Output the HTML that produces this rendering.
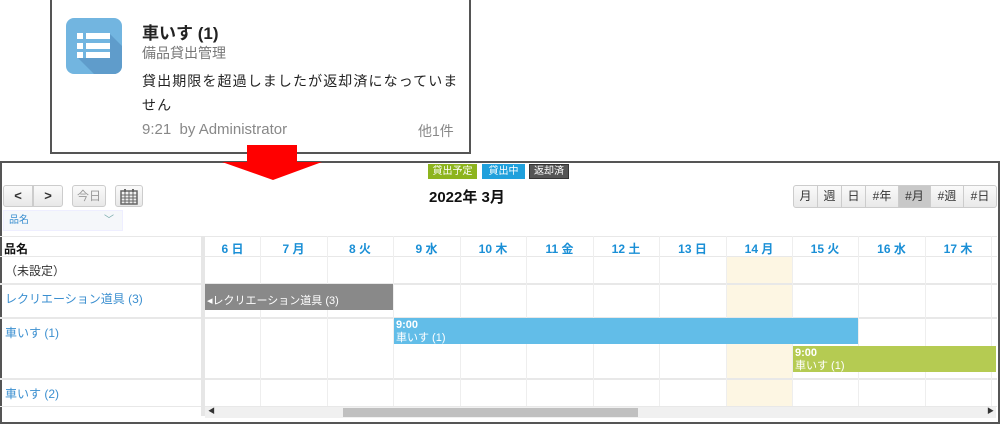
<!DOCTYPE html>
<html><head><meta charset="utf-8"><style>
*{margin:0;padding:0;box-sizing:border-box}
body{width:1000px;height:424px;background:#fff;position:relative;overflow:hidden;font-family:"Liberation Sans","Noto Sans CJK JP",sans-serif}
.a{position:absolute}
.note{left:50px;top:0;width:421px;height:154px;border:2px solid #555;border-top:none;background:#fff}
.frame{left:0;top:161px;width:1000px;height:263px;border:2px solid #555;background:#fff}
.lg{font-size:10px;color:#fff;text-align:center;line-height:15px;height:15px;top:164px}
.btn{border:1px solid #ccc;border-radius:3px;background:linear-gradient(#fafafa,#e8e8e8);text-align:center;font-size:13px;line-height:20px;height:22px;top:185px;color:#333}
.vb{top:185px;height:23px;border:1px solid #ccc;background:linear-gradient(#fafafa,#e9e9e9);font-size:12px;line-height:21px;text-align:center;color:#333}
.hl{background:#e8e8e8;height:1px;left:0;width:997px}
.vl{background:#eee;width:1px;top:236px;height:170px}
.dh{top:240px;font-size:12px;font-weight:bold;color:#1a8fd6;text-align:center}
.rl{left:5px;font-size:12px;color:#3b8fd0}
.ev{color:#fff;font-size:11px;padding-left:2px;line-height:13px}
</style></head><body>
<div class="a note"></div>
<div class="a" style="left:66px;top:18px;width:56px;height:56px;border-radius:8px;background:#72b5e0;overflow:hidden">
<svg class="a" style="left:0;top:0" width="56" height="56"><polygon points="44,16 56,28 56,56 28,56 12,40 44,40" fill="#5f9ccb"/></svg>
<div class="a" style="left:11px;top:15px;width:6px;height:6px;background:#fff"></div>
<div class="a" style="left:20px;top:15px;width:24px;height:6px;background:#fff"></div>
<div class="a" style="left:11px;top:25px;width:6px;height:6px;background:#fff"></div>
<div class="a" style="left:20px;top:25px;width:24px;height:6px;background:#fff"></div>
<div class="a" style="left:11px;top:34px;width:6px;height:6px;background:#fff"></div>
<div class="a" style="left:20px;top:34px;width:24px;height:6px;background:#fff"></div>
</div>
<div class="a" style="left:142px;top:19px;font-size:17px;font-weight:bold;color:#222">車いす (1)</div>
<div class="a" style="left:142px;top:43px;font-size:14px;color:#777">備品貸出管理</div>
<div class="a" style="left:142px;top:69px;font-size:14px;color:#222;line-height:24px;white-space:nowrap;letter-spacing:1.1px">貸出期限を超過しましたが返却済になっていま<br>せん</div>
<div class="a" style="left:142px;top:121px;font-size:15px;color:#888">9:21&nbsp; by Administrator</div>
<div class="a" style="left:418px;top:121px;font-size:14px;color:#888">他1件</div>

<div class="a frame"></div>
<div class="a" style="left:247px;top:145px;width:50px;height:18px;background:#f00"></div>
<svg class="a" style="left:222px;top:161px" width="100" height="20"><polygon points="0,1 100,1 51,19" fill="#f00"/></svg>

<div class="a lg" style="left:428px;width:49px;background:#8db41d">貸出予定</div>
<div class="a lg" style="left:482px;width:43px;background:#1fa0dc">貸出中</div>
<div class="a lg" style="left:529px;width:40px;background:#555;border:1px solid #333;line-height:13px">返却済</div>

<div class="a btn" style="left:3px;width:30px;border-radius:3px 0 0 3px;font-weight:bold">&lt;</div>
<div class="a btn" style="left:33px;width:30px;border-radius:0 3px 3px 0;font-weight:bold">&gt;</div>
<div class="a btn" style="left:72px;width:34px;color:#999;font-size:12px">今日</div>
<div class="a btn" style="left:115px;width:28px"><svg width="18" height="16" style="margin-top:3px"><rect x="1" y="2" width="16" height="13" fill="none" stroke="#666" stroke-width="1.5"/><path d="M1 6H17M1 9H17M1 12H17M5 2V15M9 2V15M13 2V15" stroke="#666"/><path d="M5 0V3M13 0V3" stroke="#666" stroke-width="2"/></svg></div>
<div class="a" style="left:429px;top:186px;font-size:15px;font-weight:bold;color:#111">2022年 3月</div>

<div class="a vb" style="left:793px;width:25px;border-radius:3px 0 0 3px">月</div>
<div class="a vb" style="left:817px;width:25px">週</div>
<div class="a vb" style="left:841px;width:25px">日</div>
<div class="a vb" style="left:865px;width:34px">#年</div>
<div class="a vb" style="left:898px;width:33px;background:#c8c8c8">#月</div>
<div class="a vb" style="left:930px;width:34px">#週</div>
<div class="a vb" style="left:963px;width:34px;border-radius:0 3px 3px 0">#日</div>

<div class="a" style="left:3px;top:210px;width:120px;height:21px;background:#f5f7fa;border:1px solid #eef;font-size:10px;color:#3b8fd0;line-height:19px;padding-left:5px">品名<span style="position:absolute;right:8px;color:#7aa">﹀</span></div>

<div class="a" style="left:726px;top:256px;width:66px;height:150px;background:#fdf6e3"></div>
<div class="a hl" style="top:236px"></div>
<div class="a hl" style="top:256px"></div>
<div class="a hl" style="top:283px;height:2px"></div>
<div class="a hl" style="top:317px;height:2px"></div>
<div class="a hl" style="top:378px;height:2px"></div>
<div class="a hl" style="top:406px"></div>
<div class="a" style="left:201px;top:236px;width:4px;height:180px;background:#e6e6e6"></div>
<div class="a vl" style="left:260px"></div><div class="a vl" style="left:327px"></div><div class="a vl" style="left:393px"></div><div class="a vl" style="left:460px"></div><div class="a vl" style="left:526px"></div><div class="a vl" style="left:593px"></div><div class="a vl" style="left:659px"></div><div class="a vl" style="left:726px"></div><div class="a vl" style="left:792px"></div><div class="a vl" style="left:858px"></div><div class="a vl" style="left:925px"></div><div class="a vl" style="left:991px"></div>

<div class="a" style="left:4px;top:240px;font-size:12px;font-weight:bold;color:#111">品名</div>
<div class="a dh" style="left:205px;width:55px">6 日</div>
<div class="a dh" style="left:260px;width:67px">7 月</div>
<div class="a dh" style="left:327px;width:66px">8 火</div>
<div class="a dh" style="left:393px;width:67px">9 水</div>
<div class="a dh" style="left:460px;width:66px">10 木</div>
<div class="a dh" style="left:526px;width:67px">11 金</div>
<div class="a dh" style="left:593px;width:66px">12 土</div>
<div class="a dh" style="left:659px;width:67px">13 日</div>
<div class="a dh" style="left:726px;width:66px">14 月</div>
<div class="a dh" style="left:792px;width:66px">15 火</div>
<div class="a dh" style="left:858px;width:67px">16 水</div>
<div class="a dh" style="left:925px;width:66px">17 木</div>

<div class="a" style="left:5px;top:262px;font-size:12px;color:#333">（未設定）</div>
<div class="a rl" style="top:290px">レクリエーション道具 (3)</div>
<div class="a rl" style="top:324px">車いす (1)</div>
<div class="a rl" style="top:385px">車いす (2)</div>

<div class="a ev" style="left:205px;top:284px;width:188px;height:26px;background:#898989;padding-top:11px">◂レクリエーション道具 (3)</div>
<div class="a ev" style="left:394px;top:318px;width:464px;height:26px;background:#62bde8;padding-top:1px"><b>9:00</b><br>車いす (1)</div>
<div class="a ev" style="left:793px;top:346px;width:203px;height:26px;background:#b5cb52;padding-top:1px"><b>9:00</b><br>車いす (1)</div>

<div class="a" style="left:205px;top:407px;width:791px;height:11px;background:#f0f0f0"></div>
<div class="a" style="left:343px;top:408px;width:295px;height:9px;background:#c0c0c0"></div>
<div class="a" style="left:208px;top:406px;font-size:7px;color:#333">◀</div>
<div class="a" style="left:987px;top:406px;font-size:7px;color:#333">▶</div>
</body></html>
